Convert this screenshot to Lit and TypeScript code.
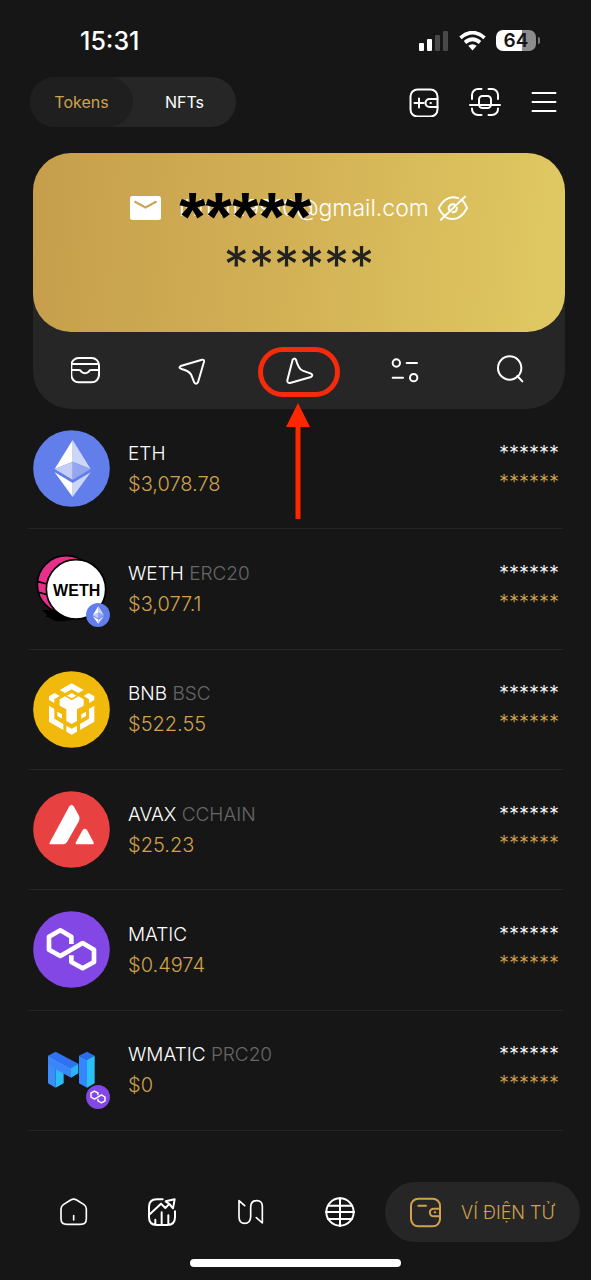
import { LitElement, html, css, svg, nothing } from "lit";
import { customElement, property, state } from "lit/decorators.js";
import { classMap } from "lit/directives/class-map.js";

const line = (viewBox: string, width: number, height: number, shapes: unknown) => html`
  <svg class="line" viewBox=${viewBox} width=${width} height=${height} aria-hidden="true">${shapes}</svg>
`;

const icons = {
  addWallet: line("0 0 30 30", 30, 30, svg`
    <rect x="1.5" y="2.5" width="27" height="27" rx="7"/>
    <path d="M10 11.5v9M5.5 16h9M28.5 12h-8a4 4 0 0 0 0 8h8M21.5 16h.4"/>`),
  scan: line("0 0 34 30", 34, 30, svg`
    <path d="M4 12V8a6 6 0 0 1 6-6h3.5M20.500 2H24a6 6 0 0 1 6 6v4M4 21.500V22a6 6 0 0 0 6 6h3.500M20.500 28H24a6 6 0 0 0 6-6v-.5M2 18h30"/>
    <rect x="11" y="9" width="12" height="12" rx="3.500"/>`),
  menu: line("0 0 26 22", 26, 22, svg`<path d="M1.500 2h23M1.500 11h23M1.500 20h23"/>`),
  archive: line("153 105 90 90", 30, 30, svg`
    <g class="tri"><rect x="154" y="114" width="83" height="73" rx="22"/>
    <path d="M157 132h77M155 150h21q6 0 8 5q11 9 22 0q2-5 8-5h22"/></g>`),
  send: line("469 105 90 90", 30, 30, svg`
    <path class="tri" d="M477 138q-8 5 3 9q20 5 28 16l10 25q6 7 11-1l18-62q1-7-6-6z"/>`),
  receive: line("795 105 90 90", 30, 30, svg`
    <path class="tri" d="M821 119q6-7 10 0q7 27 20 33l25 9q8 5 0 10l-63 18q-9 0-8-8z"/>`),
  filter: line("270 105 90 90", 30, 30, svg`
    <g class="tri"><circle cx="289" cy="129" r="11"/><circle cx="341" cy="173" r="11"/>
    <path d="M320 129h31M278 173h31"/></g>`),
  search: line("591 105 90 90", 30, 30, svg`
    <g class="tri"><circle cx="629" cy="144" r="35"/><path d="M652 168l15 16"/></g>`),
  home: line("114 81 90 90", 30, 30, svg`
    <path class="thin" d="M123 117q0-8 7-13l22-14q9-5 18 0l22 14q7 5 7 13v29q0 17-18 17h-40q-18 0-18-17zM161 137v13"/>`),
  chart: line("382 83 90 90", 30, 30, svg`
    <path class="tri" d="M429 90h-18q-23 0-23 23v31q0 23 23 23h32q23 0 23-23v-18M391 134l33-31l13 13l10-10M438 96l27-6l-5 27l-11-13zM407 151v14M426 129v36M446 138v27"/>`),
  swap: line("651 81 90 90", 30, 30, svg`
    <path class="thin" d="M677 107l-17-15v48q0 20 17 20t18-20v-28q0-20 18-20t17 20v47l-18-16"/>`),
  globe: line("76 80 90 90", 30, 30, svg`
    <path class="tri" d="M121 83v84M85 106h72M79 125h84M85 146h72"/><circle class="tri" cx="121" cy="125" r="41"/>`),
  wallet: line("332 79 93 91", 31, 31, svg`
    <g class="tri"><rect x="335" y="83" width="87" height="83" rx="22"/>
    <path d="M357 104h23M421 113h-18a11 11 0 0 0 0 23h18M406 124h2"/></g>`),
  eyeOff: line("403 145 92 90", 30, 30, svg`
    <path class="tri" d="M474 164q10 7 18 26q-18 34-43 34q-13 0-21-5M422 213q-10-8-17-23q18-33 44-33q9 0 16 3M412 226l74-71M458 181q-14-8-22 6q-1 4 1 9M461 189q0 14-14 14"/>`),
};

const ethMark = svg`
  <circle cx="154.500" cy="144.500" r="115" fill="#627eea"/>
  <path fill="#fff" d="M158 59l-54 87l54-22zM104 156l54 32v42z"/>
  <path fill="#ccd6f8" d="M158 59l54 87l-54-22zM212 156l-54 32v42z"/>
  <path fill="#c3cdf6" d="M104 146l54-22v54z"/>
  <path fill="#93a6ef" d="M212 146l-54-22v54z"/>`;

const polygonMark = svg`
  <circle cx="154.500" cy="148.500" r="115" fill="#8247e5"/>
  <path fill="none" stroke="#fff" stroke-width="14" stroke-linejoin="round"
    d="M154 132v-22l-33-19l-34 19v39l34 19l67-39l34 20v37l-34 19l-34-19v-20"/>`;

const coin = (viewBox: string, shapes: unknown, cls = "coin") => html`
  <svg class=${cls} viewBox=${viewBox} aria-hidden="true">${shapes}</svg>`;

const logos: Record<string, unknown> = {
  eth: coin("39 29 231 231", ethMark),
  weth: coin("39 392 231 231", svg`
    <path fill="#000" d="M64 572h40v-20l70 45q-50 14-75 5q-8-8-22-10q12-6-13-20z"/>
    <circle cx="139" cy="496" r="87" fill="#e8308a" stroke="#000" stroke-width="5"/>
    <path stroke="#000" stroke-width="5" d="M52 486l28 8M53 518l28 8"/>
    <circle cx="168" cy="510" r="89" fill="#fff" stroke="#000" stroke-width="5"/>
    <text class="weth" x="170" y="530" text-anchor="middle">WETH</text>`),
  bnb: coin("39 32 231 231", svg`
    <circle cx="154.500" cy="147.500" r="115" fill="#f0b90b"/>
    <g fill="#fff">
      <path d="M155 69l36 20l-16 9l-20-11l-20 11l-16-9zM155 98l14 8l-14 8l-14-8z"/>
      <path d="M87 108l17-10l15 9l-16 10v11l-16-9zM223 108l-17-10l-15 9l16 10v11l16-9z"/>
      <path d="M119 117l16-9l20 12l20-12l16 9v19l-20 11v35l-16 9l-16-9v-35l-20-11z"/>
      <path d="M112 154l14 8v13l-14-8zM198 154l-14 8v13l14-8z"/>
      <path d="M87 136l16 10v29l27 16v18l-43-25zM223 136l-16 10v29l-27 16v18l43-25z"/>
      <path d="M139 196l16 9l16-9v18l-16 9l-16-9z"/>
    </g>`),
  avax: coin("39 392 231 231", svg`
    <circle cx="154.500" cy="507.500" r="115" fill="#e84142"/>
    <path fill="#fff" d="M148 438q7-9 13 0l16 28q4 8 0 16l-36 63q-4 7-12 7h-37q-6 0-2-7zM188 509q6-8 13 0l19 35q4 8-3 8h-45q-8 0-4-7z"/>`),
  matic: coin("39 33 231 231", polygonMark),
  wmatic: coin("39 396 231 231", svg`
    <path fill="#3a8dfb" d="M84 467l23 12v84l-23-13z"/>
    <path fill="#2bbcf7" d="M107 498l24 13v39l-24 13z"/>
    <path fill="#2f72f3" d="M84 467l23-12l68 36l-22 14z"/>
    <path fill="#3a86f8" d="M84 467l69 37v29l-69-38z"/>
    <path fill="#2bb4f7" d="M153 504l22-13v29l-22 13z"/>
    <path fill="#2b6df0" d="M177 467l24-12l23 12l-23 12z"/>
    <path fill="#3488fb" d="M177 467l24 12v84l-24-13z"/>
    <path fill="#2bc0f6" d="M201 479l23-12v83l-23 13z"/>`),
};

const badges: Record<string, unknown> = {
  eth: coin("39 29 231 231", ethMark, "badge"),
  polygon: coin("39 33 231 231", polygonMark, "badge"),
};

interface Token {
  logo: string;
  badge?: string;
  name: string;
  network?: string;
  price: string;
}

const tokens: Token[] = [
  { logo: "eth", name: "ETH", price: "$3,078.78" },
  { logo: "weth", badge: "eth", name: "WETH", network: "ERC20", price: "$3,077.1" },
  { logo: "bnb", name: "BNB", network: "BSC", price: "$522.55" },
  { logo: "avax", name: "AVAX", network: "CCHAIN", price: "$25.23" },
  { logo: "matic", name: "MATIC", price: "$0.4974" },
  { logo: "wmatic", badge: "polygon", name: "WMATIC", network: "PRC20", price: "$0" },
];

const shared = css`
  * { box-sizing: border-box; }
  button {
    display: flex;
    align-items: center;
    justify-content: center;
    margin: 0;
    padding: 0;
    border: 0;
    background: none;
    color: inherit;
    font: inherit;
    cursor: pointer;
  }
  svg { display: block; flex: none; }
  .line {
    fill: none;
    stroke: currentColor;
    stroke-width: 2;
    stroke-linecap: round;
    stroke-linejoin: round;
  }
  .tri { stroke-width: 6; }
  .thin { stroke-width: 5; }
`;

@customElement("token-row")
export class TokenRow extends LitElement {
  @property({ attribute: false }) token!: Token;

  static styles = [shared, css`
    :host {
      display: flex;
      align-items: center;
      gap: 18px;
      padding: 0 4px 0 5px;
      border-bottom: 1px solid #252525;
    }
    .logo { position: relative; flex: none; }
    .coin { width: 77px; height: 77px; }
    .badge { position: absolute; right: 0; bottom: 0; width: 24px; height: 24px; }
    .weth { font: 700 48px "Liberation Sans", sans-serif; }
    .text { flex: 1; font-size: 20px; font-weight: 300; line-height: 30px; }
    .name { color: #fff; }
    .text .name { font-size: 19px; }
    .network { color: #666; }
    .price, .value { color: #d0a24c; }
    .hidden { padding-bottom: 2px; text-align: right; font-size: 20px; font-weight: 300; line-height: 29px; }
  `];

  render() {
    const { logo, badge, name, network, price } = this.token;
    return html`
      <div class="logo">${logos[logo]}${badge ? badges[badge] : nothing}</div>
      <div class="text">
        <div class="name">${name}${network ? html` <span class="network">${network}</span>` : nothing}</div>
        <div class="price">${price}</div>
      </div>
      <div class="hidden">
        <div class="name">******</div>
        <div class="value">******</div>
      </div>`;
  }
}

@customElement("app-root")
export class AppRoot extends LitElement {
  @state() private tab = "Tokens";

  static styles = [shared, css`
    :host {
      display: flex;
      flex-direction: column;
      min-height: 100vh;
      background: #161616;
      color: #fff;
      font-family: Inter, "Noto Sans", sans-serif;
    }
    .status {
      display: flex;
      align-items: center;
      justify-content: space-between;
      height: 77px;
      padding: 4px 51px 0 80px;
    }
    .time { font-size: 25px; font-weight: 500; }
    .signals { display: flex; align-items: center; gap: 10px; }
    .battery { display: flex; align-items: center; gap: 2px; }
    .charge {
      width: 40px;
      border-radius: 7px;
      background: linear-gradient(90deg, #fff 64%, #8c8c8c 64%);
      color: #161616;
      font-size: 19px;
      font-weight: 600;
      line-height: 21px;
      text-align: center;
    }
    .cap { width: 2px; height: 7px; border-radius: 0 2px 2px 0; background: #777; }
    .top {
      display: flex;
      align-items: center;
      justify-content: space-between;
      padding: 0 34px 0 30px;
    }
    .tabs { display: flex; border-radius: 25px; background: #262626; }
    .tab { width: 103px; height: 50px; border-radius: 25px; font-size: 16px; font-weight: 400; }
    .tab.active { background: #1f1f1f; color: #d0a24c; }
    .tools { display: flex; align-items: center; gap: 29px; }
    .panel { margin: 26px 26px 0 33px; border-radius: 38px; background: #262626; }
    .card {
      display: flex;
      flex-direction: column;
      align-items: center;
      height: 179px;
      padding-top: 40px;
      border-radius: 38px;
      background: linear-gradient(95deg, #c69e4c, #d3b256 50%, #e0c962);
    }
    .account { display: flex; align-items: center; height: 30px; }
    .mail { margin-right: 18px; }
    .email { position: relative; margin-right: 9px; font-size: 23px; font-weight: 300; line-height: 30px; }
    .mask {
      position: absolute;
      left: 0;
      top: 8px;
      color: #000;
      font: 700 68px/30px "Liberation Sans", sans-serif;
    }
    .balance { margin-top: 12px; color: #222; font-size: 50px; font-weight: 400; line-height: 60px; }
    .actions { display: grid; grid-template-columns: repeat(5, 1fr); height: 77px; padding-bottom: 1px; }
    .action { position: relative; }
    .marker { position: absolute; top: 15px; left: 50%; margin-left: -41px; pointer-events: none; }
    .list {
      flex: 1;
      display: grid;
      grid-auto-rows: minmax(112px, 1fr);
      margin: 0 28px;
    }
    .nav {
      display: flex;
      align-items: center;
      justify-content: space-between;
      padding: 51px 11px 0 58px;
    }
    .links { display: flex; gap: 59px; }
    .current {
      gap: 20px;
      width: 195px;
      height: 60px;
      border-radius: 30px;
      background: #262626;
      color: #d0a24c;
      font-size: 18px;
      font-weight: 300;
    }
    .bar { width: 211px; height: 8px; margin: 17px auto 13px; border-radius: 4px; background: #fff; }
  `];

  render() {
    return html`
      <header class="status">
        <div class="time">15:31</div>
        <div class="signals">
          <svg width="31" height="20" viewBox="0 0 31 20" aria-hidden="true">
            <g fill="#fff"><rect x="1" y="12" width="5" height="8" rx="1"/><rect x="9" y="8" width="5" height="12" rx="1"/></g>
            <g fill="#484848"><rect x="17" y="4" width="5" height="16" rx="1"/><rect x="25" y="0" width="5" height="20" rx="1"/></g>
          </svg>
          <svg width="27" height="20" viewBox="0 0 27 20" aria-hidden="true">
            <path d="M1.500 6.800Q13.500-3.500 25.500 6.800M6 11.500q7.500-6.500 15 0" fill="none" stroke="#fff" stroke-width="3.700"/>
            <path d="M9.300 14.800q4.200-3.300 8.400 0L13.500 19.500z" fill="#fff"/>
          </svg>
          <div class="battery"><div class="charge">64</div><div class="cap"></div></div>
        </div>
      </header>
      <div class="top">
        <div class="tabs" role="tablist">
          ${["Tokens", "NFTs"].map((name) => html`
            <button role="tab" aria-selected=${name === this.tab} class=${classMap({ tab: true, active: name === this.tab })}
              @click=${() => { this.tab = name; }}>${name}</button>`)}
        </div>
        <div class="tools">
          <button aria-label="Add wallet">${icons.addWallet}</button>
          <button aria-label="Scan">${icons.scan}</button>
          <button aria-label="Menu">${icons.menu}</button>
        </div>
      </div>
      <section class="panel">
        <div class="card">
          <div class="account">
            <svg class="mail" width="31" height="24" viewBox="0 0 31 24" aria-hidden="true">
              <rect width="31" height="24" rx="2.500" fill="#fff"/>
              <path d="M4.500 5.500l11 6l11-6" fill="none" stroke="#cba551" stroke-width="2"/>
            </svg>
            <div class="email">ihhnm9910@gmail.com<span class="mask">*****</span></div>
            <button aria-label="Show balance">${icons.eyeOff}</button>
          </div>
          <div class="balance">******</div>
        </div>
        <div class="actions">
          <button class="action" aria-label="Archive">${icons.archive}</button>
          <button class="action" aria-label="Send">${icons.send}</button>
          <button class="action" aria-label="Receive">
            ${icons.receive}
            <svg class="marker" width="82" height="174" viewBox="0 0 82 174" aria-hidden="true">
              <rect x="2.500" y="2.500" width="77" height="45" rx="22.500" fill="none" stroke="#f62a0c" stroke-width="5"/>
              <path d="M40 56l12 24h-9.500v92h-5V80H28z" fill="#ff2600"/>
            </svg>
          </button>
          <button class="action" aria-label="Filter">${icons.filter}</button>
          <button class="action" aria-label="Search">${icons.search}</button>
        </div>
      </section>
      <main class="list">${tokens.map((token) => html`<token-row .token=${token}></token-row>`)}</main>
      <nav class="nav">
        <div class="links">
          <button aria-label="Home">${icons.home}</button>
          <button aria-label="Market">${icons.chart}</button>
          <button aria-label="Swap">${icons.swap}</button>
          <button aria-label="Browser">${icons.globe}</button>
        </div>
        <button class="current">${icons.wallet}<span>VÍ ĐIỆN TỬ</span></button>
      </nav>
      <div class="bar"></div>
    `;
  }
}
